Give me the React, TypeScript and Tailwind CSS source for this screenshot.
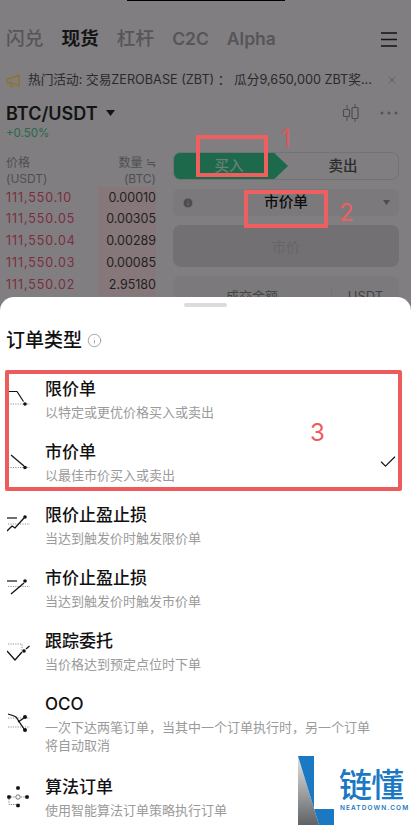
import { Check, Info, X } from "lucide-react";
import type { ReactNode } from "react";

const font = "font-['Inter','Noto_Sans_CJK_SC',sans-serif]";

const book = [
  { price: "111,550.10", qty: "0.00010" },
  { price: "111,550.05", qty: "0.00305" },
  { price: "111,550.04", qty: "0.00289" },
  { price: "111,550.03", qty: "0.00085" },
  { price: "111,550.02", qty: "2.95180" },
];

function Dotted({ y }: { y: number }) {
  return <line x1="1" y1={y} x2="23" y2={y} stroke="#777" strokeWidth="0.8" strokeDasharray="1.2 1.2" />;
}

const LimitIcon = (
  <svg width="24" height="24" viewBox="0 0 24 24">
    <Dotted y={19} />
    <circle cx="18" cy="19" r="1.8" fill="#111" />
    <path d="M2 6.5h8l6.5 10" fill="none" stroke="#111" strokeWidth="1.2" />
  </svg>
);
const MarketIcon = (
  <svg width="24" height="24" viewBox="0 0 24 24">
    <Dotted y={19.5} />
    <circle cx="18" cy="19.5" r="1.8" fill="#111" />
    <path d="M4 7l13 11" fill="none" stroke="#111" strokeWidth="1.2" />
  </svg>
);
const StopLimitIcon = (
  <svg width="24" height="24" viewBox="0 0 24 24">
    <Dotted y={13} />
    <path d="M0 7h10" stroke="#111" strokeWidth="1.2" />
    <circle cx="18" cy="6" r="1.8" fill="#111" />
    <path d="M0 20l5-5 3 2 9-10" fill="none" stroke="#111" strokeWidth="1.3" />
  </svg>
);
const StopMarketIcon = (
  <svg width="24" height="24" viewBox="0 0 24 24">
    <Dotted y={12.5} />
    <path d="M0 7h10" stroke="#111" strokeWidth="1.2" />
    <circle cx="18" cy="7" r="1.8" fill="#111" />
    <path d="M4 20L17 9" fill="none" stroke="#111" strokeWidth="1.3" />
  </svg>
);
const TrailingIcon = (
  <svg width="24" height="24" viewBox="0 0 24 24">
    <path d="M1 7h14v7" fill="none" stroke="#777" strokeWidth="0.8" strokeDasharray="1.2 1.2" />
    <path d="M0 14l8 9 7-8" fill="none" stroke="#111" strokeWidth="1.3" />
    <circle cx="17" cy="14" r="1.8" fill="#111" />
    <path d="M19 12l3.5-3" stroke="#111" strokeWidth="1.2" />
  </svg>
);
const OcoIcon = (
  <svg width="24" height="32" viewBox="0 0 24 32">
    <Dotted y={18} />
    <Dotted y={27} />
    <path d="M1 14l6 2 2 1 8 12" fill="none" stroke="#111" strokeWidth="1.3" />
    <path d="M11 22l6-4" fill="none" stroke="#111" strokeWidth="1.3" />
    <circle cx="18" cy="17" r="2" fill="#111" />
    <circle cx="18" cy="30" r="2" fill="#111" />
  </svg>
);
const AlgoIcon = (
  <svg width="24" height="26" viewBox="0 0 24 26">
    <path d="M4 14h4M14 14h4M2 16v5.5h7" fill="none" stroke="#555" strokeWidth="0.8" strokeDasharray="1.2 1.2" />
    <circle cx="11" cy="14" r="2.2" fill="none" stroke="#555" strokeWidth="0.8" />
    <rect x="9.2" y="3.2" width="3.6" height="3.6" rx="1" fill="#111" />
    <rect x="0.2" y="12.2" width="3.6" height="3.6" rx="1" fill="#111" />
    <rect x="18.2" y="12.2" width="3.6" height="3.6" rx="1" fill="#111" />
    <rect x="9.2" y="20.7" width="3.6" height="3.6" rx="1" fill="#111" />
  </svg>
);

const orderTypes: { title: string; desc: string; second?: string; icon: ReactNode; selected?: boolean }[] = [
  { title: "限价单", desc: "以特定或更优价格买入或卖出", icon: LimitIcon },
  { title: "市价单", desc: "以最佳市价买入或卖出", icon: MarketIcon, selected: true },
  { title: "限价止盈止损", desc: "当达到触发价时触发限价单", icon: StopLimitIcon },
  { title: "市价止盈止损", desc: "当达到触发价时触发市价单", icon: StopMarketIcon },
  { title: "跟踪委托", desc: "当价格达到预定点位时下单", icon: TrailingIcon },
  { title: "OCO", desc: "一次下达两笔订单，当其中一个订单执行时，另一个订单", second: "将自动取消", icon: OcoIcon },
  { title: "算法订单", desc: "使用智能算法订单策略执行订单", icon: AlgoIcon },
];

function Background() {
  return (
    <div className="flex flex-col h-full">
      <div className="mx-auto w-[158px] h-[1px] bg-black" />
      <div className="flex items-center gap-[18px] pl-[6px] pr-[14px] pt-[26px] h-[50px] text-[18.7px] font-medium text-[#565558] shrink-0">
        <span>闪兑</span>
        <span className="font-bold text-[#141414]">现货</span>
        <span>杠杆</span>
        <span className="font-semibold text-[17.5px]">C2C</span>
        <span className="font-semibold text-[17.5px]">Alpha</span>
        <svg className="ml-auto" width="16" height="15" viewBox="0 0 16 15">
          <path d="M0 1h16M0 7.5h16M0 14h16" stroke="#141414" strokeWidth="1.5" />
        </svg>
      </div>
      <div className="flex items-center mt-[18px] h-[22px] pl-[6px] pr-[13px] text-[12.7px] text-[#2a292b] shrink-0">
        <svg width="15" height="15" viewBox="0 0 15 15" className="mr-[7px] shrink-0">
          <path d="M1 5.5h4l8-3.5v11l-8-3.5H1z M4 9.5l1 4h2.5" fill="none" stroke="#8a7433" strokeWidth="1.5" />
        </svg>
        <span className="whitespace-nowrap">热门活动: 交易ZEROBASE (ZBT) ： 瓜分9,650,000 ZBT奖...</span>
        <X className="ml-auto text-[#555] shrink-0" size={12} strokeWidth={1.5} />
      </div>
      <div className="flex items-center mt-[10px] h-[24px] pl-[6px] pr-[13px] shrink-0">
        <span className="text-[18px] font-semibold text-[#141414]">BTC/USDT</span>
        <svg width="9" height="6" viewBox="0 0 9 6" className="ml-[8px]">
          <path d="M0 0h9L4.5 6z" fill="#141414" />
        </svg>
        <svg className="ml-auto mr-[21px]" width="17" height="18" viewBox="0 0 17 18">
          <path d="M5 1v16M13 0v18" stroke="#4d4c4f" strokeWidth="1" />
          <rect x="1.5" y="5.5" width="6" height="7" rx="1" fill="#807e81" stroke="#4d4c4f" strokeWidth="1.2" />
          <rect x="10" y="3.5" width="6" height="11" rx="1" fill="#807e81" stroke="#4d4c4f" strokeWidth="1.2" />
        </svg>
        <svg width="18" height="4" viewBox="0 0 18 4">
          <circle cx="2" cy="2" r="1.5" fill="#555" />
          <circle cx="9" cy="2" r="1.5" fill="#555" />
          <circle cx="16" cy="2" r="1.5" fill="#555" />
        </svg>
      </div>
      <div className="pl-[6px] mt-[1px] text-[11.5px] leading-[14px] text-[#27694a] shrink-0">+0.50%</div>

      <div className="flex mt-[14px] pl-[6px] pr-[12px] gap-[17px]">
        <div className="w-[150px] shrink-0">
          <div className="flex justify-between text-[12px] leading-[16px] text-[#4f4e51] h-[33px] pt-[1px]">
            <div>
              价格
              <br />
              (USDT)
            </div>
            <div className="text-right">
              数量 ≒
              <br />
              (BTC)
            </div>
          </div>
          <div className="relative">
            <div className="absolute right-0 top-0 bottom-0 w-[58px] bg-[#86787a]" />
            {book.map((row) => (
              <div key={row.price} className="relative flex justify-between items-center h-[21.75px] text-[12.5px]">
                <span className="text-[#7c2d3c] tracking-[0.9px]">{row.price}</span>
                <span className="text-[#1f1f20]">{row.qty}</span>
              </div>
            ))}
          </div>
        </div>
        <div className="flex-1 flex flex-col gap-[9px] -mt-[2px]">
          <div className="flex h-[28px] rounded-[7px] border border-[#747275] text-[14.5px] font-medium overflow-hidden relative">
            <div className="w-[114px] bg-[#1c6a4b] flex items-center justify-center text-[#6a7f77] pr-[4px] [clip-path:polygon(0_0,88%_0,100%_50%,88%_100%,0_100%)]">
              买入
            </div>
            <div className="flex-1 flex items-center justify-center text-[#2d2c2e]">卖出</div>
          </div>
          <div className="flex items-center h-[27px] rounded-[6px] bg-[#7b797c] px-[9px] text-[14.7px] font-medium text-[#0d0d0d]">
            <Info className="text-[#7b797c] fill-[#4d4c4f]" size={12} />
            <span className="flex-1 text-center">市价单</span>
            <span className="w-[12px] flex justify-end">
              <svg width="7" height="5" viewBox="0 0 7 5">
                <path d="M0 0h7L3.5 5z" fill="#4d4c4f" />
              </svg>
            </span>
          </div>
          <div className="flex items-center justify-center h-[42px] rounded-[8px] bg-[#727073] text-[14px] text-[#676568]">
            市价
          </div>
          <div className="flex items-center h-[42px] rounded-[8px] bg-[#7b797c] text-[13px] text-[#444345]">
            <span className="flex-1 text-center">成交金额</span>
            <span className="w-[68px] border-l border-[#747275] text-center">USDT</span>
          </div>
        </div>
      </div>
    </div>
  );
}

function OrderSheet() {
  return (
    <div className="absolute left-0 right-0 top-[297px] bottom-0 bg-white rounded-t-[14px]">
      <div className="mx-auto mt-[6px] w-[43px] h-[4px] rounded-full bg-[#dcdcdc]" />
      <div className="flex items-center gap-[5px] mt-[20px] pl-[6px] h-[27px]">
        <span className="text-[19px] leading-[27px] font-medium text-[#111]">订单类型</span>
        <Info className="text-[#8b8b8b]" size={15} strokeWidth={1.2} />
      </div>
      <div className="mt-[23px]">
        {orderTypes.map((t) => (
          <div key={t.title} className={`flex pl-[7px] pr-[13px] ${t.second ? "pb-[21px]" : "pb-[19px]"}`}>
            <div className="w-[38px] h-0 shrink-0 pt-[8px]">{t.icon}</div>
            <div className="flex-1 min-w-0">
              <div className="text-[17px] leading-[24px] text-[#111] font-medium">{t.title}</div>
              <div className="text-[13px] leading-[18px] mt-[2px] text-[#9a9a9a]">
                {t.desc}
                {t.second && (
                  <>
                    <br />
                    {t.second}
                  </>
                )}
              </div>
            </div>
            {t.selected && <Check className="self-start mt-[12px] text-[#111]" size={20} strokeWidth={1.4} />}
          </div>
        ))}
      </div>
    </div>
  );
}

function Watermark() {
  return (
    <div className="absolute right-0 bottom-0 w-[114px] h-[71px] bg-white">
      <svg className="absolute left-[1px] top-[2px]" width="36" height="69" viewBox="0 0 36 69">
        <defs>
          <linearGradient id="grey" x1="0" y1="0" x2="0" y2="1">
            <stop offset="0" stopColor="#e4e4e4" />
            <stop offset="1" stopColor="#5f6366" />
          </linearGradient>
        </defs>
        <path d="M0 0l21 69H0z" fill="url(#grey)" />
        <path d="M0 0h16v53h20v16H21z" fill="#1b78c2" />
      </svg>
      <div className="absolute left-[42px] top-[15px] text-[33px] leading-[33px] font-medium text-[#1b78c2] whitespace-nowrap tracking-[-1px]">
        链懂
      </div>
      <div className="absolute left-[43px] top-[50px] text-[6.5px] leading-[8px] font-semibold tracking-[1.1px] text-[#1b78c2] whitespace-nowrap">
        NEATDOWN.COM
      </div>
    </div>
  );
}

export default function App() {
  return (
    <div className={`${font} relative w-[411px] h-[825px] overflow-hidden bg-[#807e81]`}>
      <Background />
      <OrderSheet />
      <Watermark />

      {/* annotations */}
      <div className="absolute left-[196px] top-[135px] w-[72px] h-[42px] border-[4px] border-[#ef5f5f]" />
      <div className="absolute left-[281px] top-[125px] text-[24px] leading-[28px] text-[#e0585a]">1</div>
      <div className="absolute left-[244px] top-[190px] w-[84px] h-[38px] border-[4px] border-[#ef5f5f]" />
      <div className="absolute left-[339px] top-[199px] text-[24px] leading-[28px] text-[#ef5f5f]">2</div>
      <div className="absolute left-[5px] top-[370px] w-[397px] h-[121px] border-[4px] border-[#ec5c5c] rounded-[2px]" />
      <div className="absolute left-[310px] top-[418px] text-[24px] leading-[30px] text-[#ec5c5c]">3</div>
    </div>
  );
}
